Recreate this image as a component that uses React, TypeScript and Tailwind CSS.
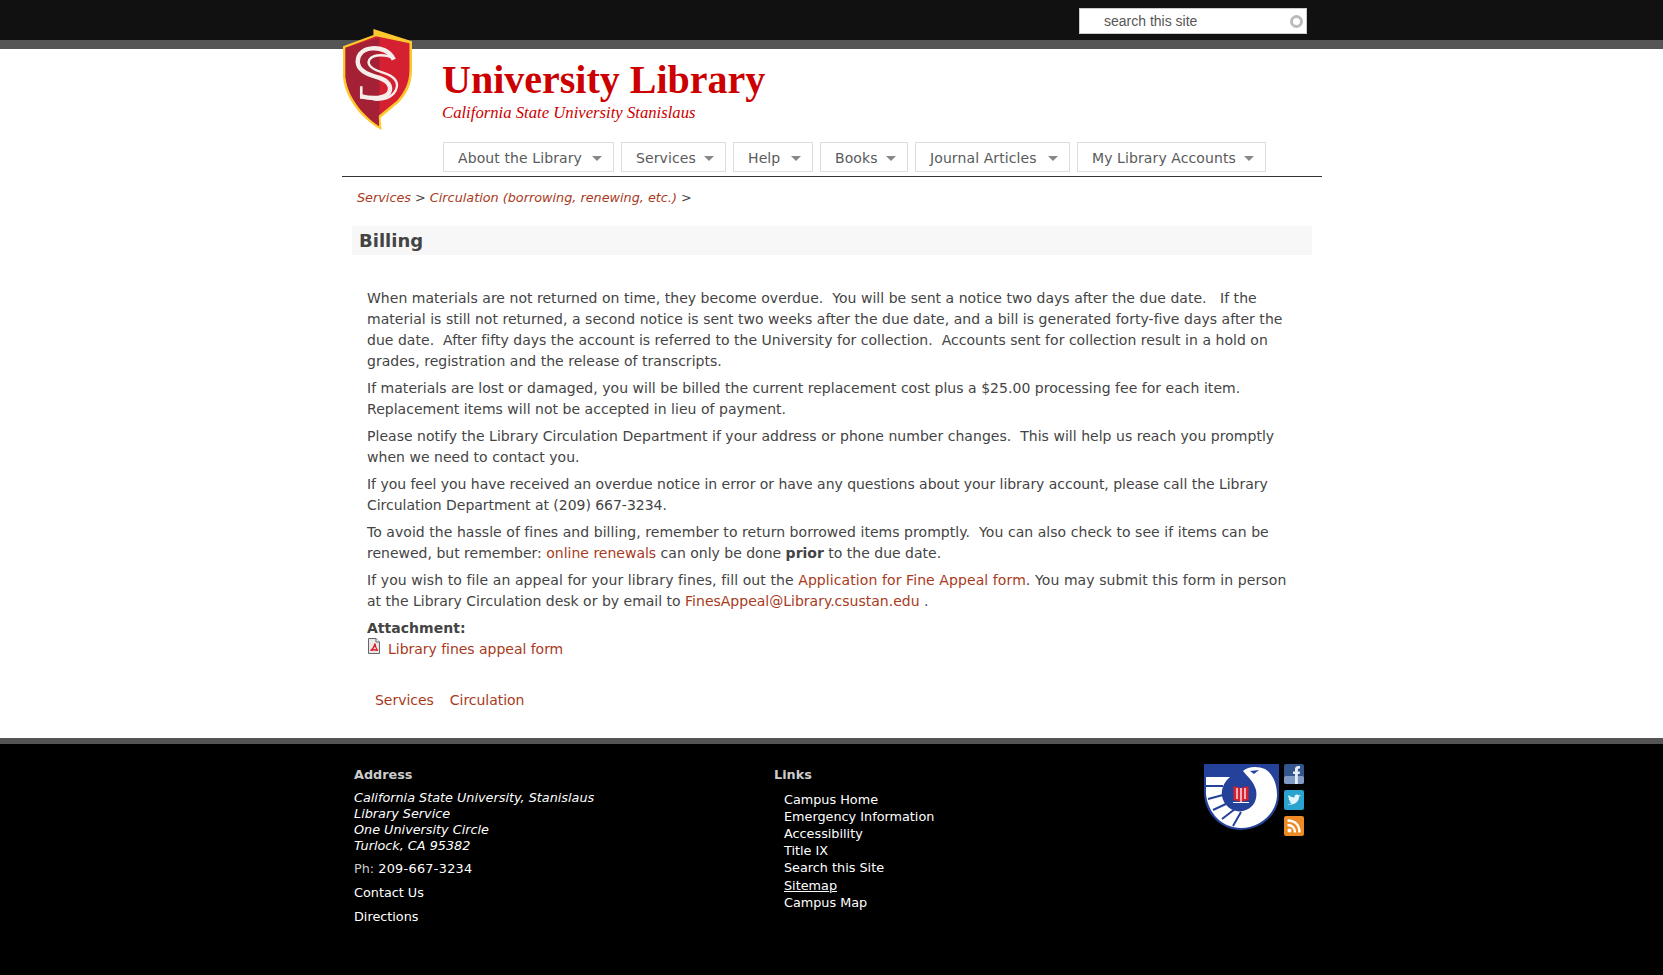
import React from "react";

const verdana = "font-['DejaVu_Sans',Verdana,sans-serif]";

const navItems = ["About the Library", "Services", "Help", "Books", "Journal Articles", "My Library Accounts"];
const navWidths: Record<string, string> = {
  "About the Library": "w-[171px]",
  Services: "w-[105px]",
  Help: "w-[80px]",
  Books: "w-[88px]",
  "Journal Articles": "w-[155px]",
  "My Library Accounts": "w-[189px]",
};
const footerLinks = ["Campus Home", "Emergency Information", "Accessibility", "Title IX", "Search this Site", "Sitemap", "Campus Map"];

const Shield = () => (
  <svg width="69" height="101" viewBox="0 0 68 99" preserveAspectRatio="none" className="block">
    <path d="M30 0 L68 12 L68 40 C68 54 63 64 55 72 L37 87 L38 99 C18 88 2 68 0 47 L0 17 L30 6 Z" fill="#fdc82f" />
    <path d="M32.5 7 L65.5 14 L65.5 40 C65.5 53 60.5 62 53.5 70 L35 85 L35.5 95 C19 84 4.5 66 2.5 47 L2.5 18.5 Z" fill="#d52032" />
    <path d="M36 8 L2.5 18.5 L2.5 47 C4.5 66 19 84 35.5 95 L35 85 L36 84 Z" fill="#a32035" />
    <path d="M50 30 C46 21 36 18 28 19 C18 20 13 27 15 35 C17 42 26 45 36 48 C44 51 49 56 45 63 C41 68 30 69 18 66" fill="none" stroke="#f6eeea" strokeWidth="4.4" />
    <path d="M50 29 C44 25 30 24 26 30 C23 36 30 40 40 43 C50 46 56 52 52 60 C48 68 38 70 30 69" fill="none" stroke="#f6eeea" strokeWidth="2.4" />
    <path d="M18 56 L18 67 L24 67" fill="none" stroke="#f6eeea" strokeWidth="2.6" />
  </svg>
);

const PdfIcon = () => (
  <svg width="12" height="16" viewBox="0 0 12 16" className="-mt-[1px] ml-[1px] block">
    <path d="M0.5 0.5 H8 L11.5 4 V15.5 H0.5 Z" fill="#e8e8e8" stroke="#666" />
    <path d="M8 0.5 V4 H11.5" fill="#fff" stroke="#666" />
    <path d="M2.5 12.5 C5 11 6.5 8 7 5.5 C7.5 9 8.5 11.5 10 12.5 C7.5 11.5 5 11.5 2.5 12.5 Z" fill="none" stroke="#e01b24" strokeWidth="1.3" />
  </svg>
);

const Seal = () => (
  <svg width="75" height="66" viewBox="0 0 75 66" className="block">
    <path d="M0 0 H75 V31 C75 50 58 66 37 66 C17 66 0 50 0 28 Z" fill="#24429a" />
    <path d="M2 13 H26 C20 18 17 25 18 32 C20 43 30 49 39 47 C49 45 54 36 52 26 C50 18 44 13 39 7 C44 2 54 2 61 5 C69 10 73 20 73 31 C73 48 57 64 37 64 C19 64 4 50 2 30 Z" fill="#fff" />
    <path d="M2 22 L19 22 M4 35 L19 31 M9 46 L24 39 M18 55 L31 45 M29 62 L37 48" stroke="#24429a" strokeWidth="2" />
    <circle cx="37" cy="31" r="14.5" fill="#24429a" />
    <path d="M29.5 22 L37 24 L44.5 22 V36 L37 38 L29.5 36 Z" fill="#d9202f" />
    <path d="M37 24 V38 M33 24 V35 M41 24 V35" stroke="#fff" strokeWidth="1.3" />
    <path d="M29 38.5 H45" stroke="#fff" strokeWidth="1" />
    <path d="M46 7 L55 6 L50 10 Z" fill="#24429a" />
  </svg>
);

const Facebook = () => (
  <svg width="20" height="20" viewBox="0 0 20 20" className="block">
    <rect width="20" height="20" rx="2" fill="#34568f" />
    <rect y="12" width="20" height="8" rx="2" fill="#7f9ac4" />
    <path d="M11 20 V10 H9 V7.5 H11 V5 C11 2.5 13 1.5 16 2 V4.5 C14 4.5 13.8 5 13.8 7.5 H16 L15.7 10 H13.8 V20 Z" fill="#e8eef7" />
  </svg>
);

const Twitter = () => (
  <svg width="20" height="20" viewBox="0 0 20 20" className="block">
    <rect width="20" height="20" rx="2" fill="#2aa3cf" />
    <path d="M3 14 C8 16 15 13 15 7 L17 5 L15 5.5 C13.5 3.5 10 4.5 10.5 7.5 C8 7.5 6 6.5 4.5 5 C4 6.5 4.5 8 5.5 9 L4.5 8.8 C4.8 10 5.5 11 7 11.4 L5.5 11.5 C6 12.5 7 13 8 13 C6.5 14 5 14.2 3 14 Z" fill="#e4f5fb" />
  </svg>
);

const Rss = () => (
  <svg width="20" height="20" viewBox="0 0 20 20" className="block">
    <rect width="20" height="20" rx="2" fill="#ee8a26" />
    <circle cx="5.5" cy="14.5" r="2" fill="#fff" />
    <path d="M3.5 9 C8 9 11 12 11 16.5 M3.5 4.5 C11 4.5 15.5 9 15.5 16.5" fill="none" stroke="#fff" strokeWidth="2.4" />
  </svg>
);

const App = () => {
  return (
    <div className={`min-h-[975px] bg-white text-[#444] ${verdana}`}>
      <div className="h-10 bg-[#111]">
        <div className="ml-[342px] flex h-full w-[980px] justify-end pr-[15px] pt-2">
          <div className="flex h-[26px] w-[228px] items-center justify-between border border-[#ccc] bg-white pl-6 pr-[3px] font-['Liberation_Sans',Arial,sans-serif] text-sm text-[#555]">
            <span>search this site</span>
            <span className="h-[13px] w-[13px] rounded-full border-[3px] border-[#bbb]"></span>
          </div>
        </div>
      </div>
      <div className="h-[9px] bg-[#555]"></div>

      <div className="ml-[342px] w-[980px]">
        <header className="relative h-[128px] border-b border-[#333]">
          <div className="absolute left-[1px] top-[-20px]">
            <Shield />
          </div>
          <div className="pl-[100px] pt-[11px] font-['Liberation_Serif',Georgia,serif] text-[#cc0000]">
            <div className="text-[40px] font-bold leading-[40px]">University Library</div>
            <div className="mt-[3px] text-[16.7px] italic leading-[20px]">California State University Stanislaus</div>
          </div>
          <nav className="mt-[19px] flex gap-[7px] pl-[101px]">
            {navItems.map((item) => (
              <div
                key={item}
                className={`flex h-[30px] items-center justify-between border border-[#ddd] pl-[14px] pr-[11px] pt-[1px] text-sm tracking-[0.1px] text-[#5a5a5a] ${navWidths[item]}`}
              >
                <span>{item}</span>
                <span className="mt-[2px] h-0 w-0 border-x-[5px] border-t-[5px] border-x-transparent border-t-[#888]"></span>
              </div>
            ))}
          </nav>
        </header>

        <div className="px-[15px] pt-[11px] text-[12.8px] leading-[20px]">
          <i className="text-[#a83a1c]">Services</i> <span>&gt;</span>{" "}
          <i className="text-[#a83a1c]">Circulation (borrowing, renewing, etc.)</i> <span>&gt;</span>
        </div>

        <h1 className="mx-[10px] mt-[18px] h-[29px] bg-[#f7f7f7] pl-[7px] text-lg font-bold leading-[29px]">Billing</h1>

        <main className="pl-[25px] pr-[10px] pt-[33px] text-sm leading-[21px] tracking-[0.03px]">
          <p>
            When materials are not returned on time, they become overdue.&nbsp; You will be sent a notice two days after the due date.&nbsp;&nbsp; If the
            <br />
            material is still not returned, a second notice is sent two weeks after the due date, and a bill is generated forty-five days after the
            <br />
            due date.&nbsp; After fifty days the account is referred to the University for collection.&nbsp; Accounts sent for collection result in a hold on
            <br />
            grades, registration and the release of transcripts.
          </p>
          <p className="mt-[6px]">
            If materials are lost or damaged, you will be billed the current replacement cost plus a $25.00 processing fee for each item.
            <br />
            Replacement items will not be accepted in lieu of payment.
          </p>
          <p className="mt-[6px]">
            Please notify the Library Circulation Department if your address or phone number changes.&nbsp; This will help us reach you promptly
            <br />
            when we need to contact you.
          </p>
          <p className="mt-[6px] tracking-[-0.03px]">
            If you feel you have received an overdue notice in error or have any questions about your library account, please call the Library
            <br />
            Circulation Department at (209) 667-3234.
          </p>
          <p className="mt-[6px] tracking-[0.05px]">
            To avoid the hassle of fines and billing, remember to return borrowed items promptly.&nbsp; You can also check to see if items can be
            <br />
            <span className="tracking-[0px]">
              renewed, but remember: <a className="text-[#a83a1c]">online renewals</a> can only be done <b>prior</b> to the due date.
            </span>
          </p>
          <p className="mt-[6px] tracking-[0.09px]">
            If you wish to file an appeal for your library fines, fill out the <a className="text-[#a83a1c]">Application for Fine Appeal form</a>. You may submit this form in person
            <br />
            <span className="tracking-[0px]">
              at the Library Circulation desk or by email to <a className="text-[#a83a1c]">FinesAppeal@Library.csustan.edu</a> .
            </span>
          </p>
          <div className="mt-[6px] font-bold">Attachment:</div>
          <div className="flex items-start gap-[8px] tracking-[-0.03px]">
            <PdfIcon />
            <a className="text-[#a83a1c]">Library fines appeal form</a>
          </div>
          <div className="ml-[8px] mt-[30px] flex gap-4 tracking-[-0.03px] text-[#a83a1c]">
            <a>Services</a>
            <a>Circulation</a>
          </div>
        </main>
      </div>

      <footer className="mt-[27px] border-t-[6px] border-[#555] bg-black text-white">
        <div className="ml-[342px] flex h-[231px] w-[980px] pl-[12px] pt-[21px] text-[12.8px]">
          <div className="w-[420px]">
            <div className="font-bold leading-[20px] text-[#ccc]">Address</div>
            <div className="mt-[5px] italic leading-[16px]">
              California State University, Stanislaus
              <br />
              Library Service
              <br />
              One University Circle
              <br />
              Turlock, CA 95382
            </div>
            <div className="mt-[7px] leading-[16px]">
              <span className="text-[#ccc]">Ph:</span> <span className="tracking-[0.3px]">209-667-3234</span>
            </div>
            <div className="mt-[8px] leading-[16px]">Contact Us</div>
            <div className="mt-[8px] leading-[16px]">Directions</div>
          </div>
          <div className="w-[430px]">
            <div className="font-bold leading-[20px] text-[#ccc]">Links</div>
            <ul className="mt-[5.5px] pl-[10px] leading-[17.2px]">
              {footerLinks.map((link) => (
                <li key={link} className={link === "Sitemap" ? "underline" : ""}>
                  {link}
                </li>
              ))}
            </ul>
          </div>
          <div className="-mt-[1px] flex gap-[5px]">
            <Seal />
            <div className="flex flex-col gap-[6px]">
              <Facebook />
              <Twitter />
              <Rss />
            </div>
          </div>
        </div>
      </footer>
    </div>
  );
};

export default App;
